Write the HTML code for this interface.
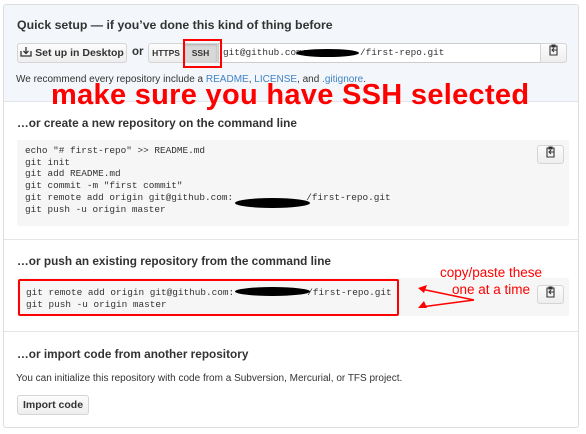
<!DOCTYPE html>
<html><head><meta charset="utf-8"><style>
*{box-sizing:border-box;margin:0;padding:0}
body{width:586px;height:434px;background:#fff;font-family:"Liberation Sans",Arial,sans-serif;color:#333;position:relative;overflow:hidden}
.box{position:absolute;left:3px;top:4px;width:576px;height:424px;border:1px solid #ddd;border-radius:3px;overflow:hidden}
.s1{position:absolute;left:0;top:0;width:100%;height:97px;background:#f3f6fa;border-bottom:1px solid #e1e4e8}
.abs{position:absolute}
h3{position:absolute;font-size:11.8px;font-weight:bold;color:#333;white-space:nowrap}
.btn{position:absolute;height:20px;border:1px solid #d5d5d5;border-radius:3px;background:linear-gradient(#fcfcfc,#eee);font-size:10.5px;font-weight:bold;color:#333;line-height:18px;text-align:center;white-space:nowrap}
.code{position:absolute;background:#f6f6f6;border-radius:2px;font-family:"Liberation Mono",monospace;font-size:9.4px;line-height:11.7px;color:#333;white-space:pre}
.blk{position:absolute;background:#000;border-radius:50%}
.red{color:#f00}
.hr{position:absolute;left:0;width:100%;height:1px;background:#e5e5e5}
</style></head><body>
<div class="box">
<div class="s1"></div>
<h3 style="left:13px;top:13px;font-size:12.3px">Quick setup — if you’ve done this kind of thing before</h3>
<div class="btn" style="left:13px;top:38px;width:110px">
<svg width="12" height="11" viewBox="0 0 12 11" style="vertical-align:-1px"><path d="M1 5v5h10V5M6 1v6M3.5 5L6 7.5 8.5 5" stroke="#333" stroke-width="1.3" fill="none"/></svg> Set up in Desktop</div>
<div class="abs" style="left:128px;top:41px;font-size:11.5px;font-weight:bold">or</div>
<div class="btn" style="left:144px;top:38px;width:36px;border-radius:3px 0 0 3px;font-size:8.5px">HTTPS</div>
<div class="btn" style="left:179px;top:38px;width:35px;background:#d8d8d8;border-radius:0;font-size:8.5px;box-shadow:inset 0 1px 2px rgba(0,0,0,.2)">SSH</div>
<div class="abs" style="left:214px;top:38px;width:323px;height:20px;background:#fff;border:1px solid #ccc"></div>
<div class="abs" style="left:219px;top:38px;font-family:'Liberation Mono',monospace;font-size:9.4px;line-height:20px;color:#333">git@github.com:</div>
<div class="abs" style="left:356px;top:38px;font-family:'Liberation Mono',monospace;font-size:9.4px;line-height:20px;color:#333">/first-repo.git</div>
<div class="blk" style="left:292px;top:44px;width:63px;height:8px"></div>
<div class="btn" style="left:536px;top:38px;width:27px;border-radius:0 3px 3px 0">
<svg width="11" height="12" viewBox="0 0 11 12"><path d="M2 2h7v9H2z M4 1h3v2H4z M4 6h5M6 4l-2 2 2 2" stroke="#333" stroke-width="1.1" fill="none"/></svg></div>
<div class="abs" style="left:12px;top:69px;font-size:10px;color:#333">We recommend every repository include a <span style="color:#4183c4">README</span>, <span style="color:#4183c4">LICENSE</span>, and <span style="color:#4183c4">.gitignore</span>.</div>
<div class="abs red" style="left:47px;top:74px;font-size:29px;font-weight:bold;white-space:nowrap;letter-spacing:0.3px">make sure you have SSH selected</div>

<h3 style="left:13px;top:111px">…or create a new repository on the command line</h3>
<div class="code" style="left:13px;top:135px;width:552px;height:86px;padding:5px 0 0 8px">echo "# first-repo" &gt;&gt; README.md
git init
git add README.md
git commit -m "first commit"
git remote add origin git@github.com:             /first-repo.git
git push -u origin master</div>
<div class="blk" style="left:231px;top:193px;width:75px;height:10px"></div>
<div class="btn" style="left:533px;top:140px;width:27px;height:19px">
<svg width="11" height="12" viewBox="0 0 11 12"><path d="M2 2h7v9H2z M4 1h3v2H4z M4 6h5M6 4l-2 2 2 2" stroke="#333" stroke-width="1.1" fill="none"/></svg></div>
<div class="hr" style="top:234px"></div>

<h3 style="left:13px;top:249px">…or push an existing repository from the command line</h3>
<div class="code" style="left:13px;top:273px;width:552px;height:38px;padding:0"></div>
<div class="code" style="left:14px;top:274px;width:381px;height:37px;border:2px solid #f00;background:transparent;padding:6px 0 0 6px">git remote add origin git@github.com:             /first-repo.git
git push -u origin master</div>
<div class="blk" style="left:231px;top:282px;width:75px;height:9px"></div>
<div class="btn" style="left:533px;top:280px;width:27px;height:19px">
<svg width="11" height="12" viewBox="0 0 11 12"><path d="M2 2h7v9H2z M4 1h3v2H4z M4 6h5M6 4l-2 2 2 2" stroke="#333" stroke-width="1.1" fill="none"/></svg></div>
<div class="abs red" style="left:436px;top:260px;font-size:13.5px;white-space:nowrap">copy/paste these</div>
<div class="abs red" style="left:448px;top:277px;font-size:13.5px;white-space:nowrap">one at a time</div>
<svg class="abs" style="left:405px;top:278px" width="75" height="30" viewBox="0 0 75 30">
<path d="M65 17L12 6M65 17L12 24" stroke="#f00" stroke-width="1.5" fill="none"/>
<path d="M9 5l9-3-3 8z M9 25l6-7 3 7z" fill="#f00"/></svg>
<div class="hr" style="top:326px"></div>

<h3 style="left:13px;top:342px">…or import code from another repository</h3>
<div class="abs" style="left:12px;top:368px;font-size:10px">You can initialize this repository with code from a Subversion, Mercurial, or TFS project.</div>
<div class="btn" style="left:13px;top:390px;width:72px;height:20px">Import code</div>
<div class="abs red" style="left:179px;top:34px;width:39px;height:29px;border:2px solid #f00"></div>
</div>
</body></html>
